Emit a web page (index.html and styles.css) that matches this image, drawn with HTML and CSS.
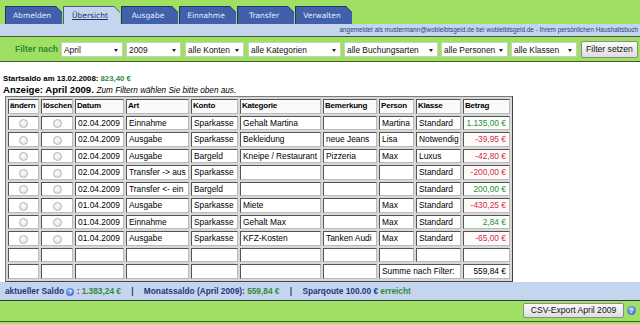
FILE: index.html
```html
<!DOCTYPE html>
<html lang="de">
<head>
<meta charset="utf-8">
<title>wobleibtsgeld.de - Übersicht</title>
<link rel="stylesheet" href="styles.css">
</head>
<body>
<div class="page">
  <div class="tabs">
    <div class="tab"><span>Abmelden</span></div>
    <div class="tab active"><span>Übersicht</span></div>
    <div class="tab"><span>Ausgabe</span></div>
    <div class="tab"><span>Einnahme</span></div>
    <div class="tab"><span>Transfer</span></div>
    <div class="tab"><span>Verwalten</span></div>
  </div>
  <div class="info">angemeldet als mustermann@wobleibtsgeld.de bei wobleibtsgeld.de - Ihrem persönlichen Haushaltsbuch</div>
  <div class="filter">
    <span class="flabel">Filter nach</span>
    <div class="sel w-month">April<i></i></div>
    <div class="sel w-year">2009<i></i></div>
    <div class="sel w-konto">alle Konten<i></i></div>
    <div class="sel w-kat">alle Kategorien<i></i></div>
    <div class="sel w-buch">alle Buchungsarten<i></i></div>
    <div class="sel w-pers">alle Personen<i></i></div>
    <div class="sel w-kl">alle Klassen<i></i></div>
    <div class="btn fbtn">Filter setzen</div>
  </div>
  <div class="content">
    <div class="start">Startsaldo am 13.02.2008: <span class="pos">823,40 €</span></div>
    <div class="anzeige">Anzeige: April 2009. <em>Zum Filtern wählen Sie bitte oben aus.</em></div>
    <table class="list">
      <colgroup>
        <col class="c1"><col class="c2"><col class="c3"><col class="c4"><col class="c5">
        <col class="c6"><col class="c7"><col class="c8"><col class="c9"><col class="c10">
      </colgroup>
      <tr class="head">
        <th>ändern</th><th>löschen</th><th>Datum</th><th>Art</th><th>Konto</th><th>Kategorie</th><th>Bemerkung</th><th>Person</th><th>Klasse</th><th>Betrag</th>
      </tr>
      <tr><td class="r"><span class="radio"></span></td><td class="r"><span class="radio"></span></td><td>02.04.2009</td><td>Einnahme</td><td>Sparkasse</td><td>Gehalt Martina</td><td></td><td>Martina</td><td>Standard</td><td class="amt pos">1.135,00 €</td></tr>
      <tr><td class="r"><span class="radio"></span></td><td class="r"><span class="radio"></span></td><td>02.04.2009</td><td>Ausgabe</td><td>Sparkasse</td><td>Bekleidung</td><td>neue Jeans</td><td>Lisa</td><td>Notwendig</td><td class="amt neg">-39,95 €</td></tr>
      <tr><td class="r"><span class="radio"></span></td><td class="r"><span class="radio"></span></td><td>02.04.2009</td><td>Ausgabe</td><td>Bargeld</td><td>Kneipe / Restaurant</td><td>Pizzeria</td><td>Max</td><td>Luxus</td><td class="amt neg">-42,80 €</td></tr>
      <tr><td class="r"><span class="radio"></span></td><td class="r"><span class="radio"></span></td><td>02.04.2009</td><td>Transfer -&gt; aus</td><td>Sparkasse</td><td></td><td></td><td></td><td>Standard</td><td class="amt neg">-200,00 €</td></tr>
      <tr><td class="r"><span class="radio"></span></td><td class="r"><span class="radio"></span></td><td>02.04.2009</td><td>Transfer &lt;- ein</td><td>Bargeld</td><td></td><td></td><td></td><td>Standard</td><td class="amt pos">200,00 €</td></tr>
      <tr><td class="r"><span class="radio"></span></td><td class="r"><span class="radio"></span></td><td>01.04.2009</td><td>Ausgabe</td><td>Sparkasse</td><td>Miete</td><td></td><td>Max</td><td>Standard</td><td class="amt neg">-430,25 €</td></tr>
      <tr><td class="r"><span class="radio"></span></td><td class="r"><span class="radio"></span></td><td>01.04.2009</td><td>Einnahme</td><td>Sparkasse</td><td>Gehalt Max</td><td></td><td>Max</td><td>Standard</td><td class="amt pos">2,84 €</td></tr>
      <tr><td class="r"><span class="radio"></span></td><td class="r"><span class="radio"></span></td><td>01.04.2009</td><td>Ausgabe</td><td>Sparkasse</td><td>KFZ-Kosten</td><td>Tanken Audi</td><td>Max</td><td>Standard</td><td class="amt neg">-65,00 €</td></tr>
      <tr><td></td><td></td><td></td><td></td><td></td><td></td><td></td><td></td><td></td><td></td></tr>
      <tr><td></td><td></td><td></td><td></td><td></td><td></td><td></td><td colspan="2">Summe nach Filter:</td><td class="amt">559,84 €</td></tr>
    </table>
  </div>
  <div class="saldo">
    aktueller Saldo <span class="help">?</span> : <span class="pos">1.383,24 €</span>
    <span class="sep">|</span>
    Monatssaldo (April 2009): <span class="pos">559,84 €</span>
    <span class="sep">|</span>
    Sparqoute 100.00 € <span class="pos">erreicht</span>
  </div>
  <div class="footer">
    <div class="btn csv">CSV-Export April 2009</div>
    <span class="help big">?</span>
  </div>
</div>
</body>
</html>
```

FILE: styles.css
```css
html, body {
  margin: 0;
  padding: 0;
}
body {
  background: #9fe062;
  font-family: "Liberation Sans", Arial, sans-serif;
  color: #000;
}
.page {
  width: 640px;
  height: 324px;
  overflow: hidden;
  background: #9fe062;
}

/* tabs */
.tabs {
  height: 24px;
  display: flex;
  align-items: flex-end;
  gap: 1px;
  padding-left: 5px;
}
.tab {
  position: relative;
  width: 57px;
  height: 18px;
  background: #22346e;
  clip-path: polygon(0 0, calc(100% - 6px) 0, 100% 6px, 100% 100%, 0 100%);
}
.tab span {
  display: flex;
  align-items: center;
  justify-content: center;
  height: 17px;
  margin: 1px 0 0 1px;
  padding-right: 4px;
  background: #4060ac;
  clip-path: polygon(0 0, calc(100% - 6px) 0, 100% 6px, 100% 100%, 0 100%);
  font-family: "DejaVu Sans", Verdana, sans-serif;
  font-size: 7.5px;
  color: #e6ecff;
}
.tab.active {
  background: #4a5f8e;
}
.tab.active span {
  background: #c6d5ee;
  color: #1d2f66;
  text-decoration: underline;
}

/* info bar */
.info {
  height: 12px;
  line-height: 12px;
  background: #c6d5ee;
  border-bottom: 1px solid #3e5a36;
  text-align: right;
  padding-right: 2px;
  font-size: 6.4px;
  color: #263c7c;
  white-space: nowrap;
}

/* filter bar */
.filter {
  height: 24px;
  display: flex;
  align-items: center;
  border-bottom: 1px solid #3e5a36;
  padding-left: 15px;
}
.flabel {
  width: 46px;
  font-size: 8.5px;
  font-weight: bold;
  color: #2d8a35;
  white-space: nowrap;
}
.sel {
  position: relative;
  height: 15px;
  line-height: 15px;
  background: #fff;
  border: 1px solid #c8d0c0;
  box-sizing: border-box;
  padding-left: 2px;
  font-size: 8.4px;
  color: #111;
  margin-right: 3px;
  white-space: nowrap;
}
.sel i {
  position: absolute;
  right: 4px;
  top: 6px;
  width: 0;
  height: 0;
  border-left: 2.5px solid transparent;
  border-right: 2.5px solid transparent;
  border-top: 3.5px solid #222;
}
.w-month { width: 62px; }
.w-year { width: 55px; margin-right: 4px; }
.w-konto { width: 59px; margin-right: 4px; }
.w-kat { width: 93px; }
.w-buch { width: 94px; }
.w-pers { width: 67px; }
.w-kl { width: 66px; margin-right: 4px; }
.btn {
  box-sizing: border-box;
  background: linear-gradient(#fbfbfb, #dedede);
  border: 1px solid #8a8a8a;
  border-radius: 2px;
  text-align: center;
  font-size: 8.6px;
  color: #111;
  white-space: nowrap;
}
.fbtn {
  width: 57px;
  height: 17px;
  line-height: 15px;
}

/* content */
.content {
  background: #fff;
  padding: 11px 0 0 3px;
  height: 208.5px;
}
.start {
  height: 11px;
  line-height: 11px;
  font-size: 7.8px;
  font-weight: bold;
}
.anzeige {
  height: 12px;
  line-height: 12px;
  font-size: 9.6px;
  font-weight: bold;
}
.anzeige em {
  font-weight: normal;
  font-size: 8.2px;
}
.pos { color: #2e8b3a; }
.neg { color: #cc3344; }

table.list {
  margin-left: 2px;
  table-layout: fixed;
  width: 506px;
  border-collapse: separate;
  border-spacing: 2px;
  border: 1px solid #7a7a7a;
  border-right-color: #444;
  border-bottom-color: #444;
  background: #d8d8d8;
}
.c1 { width: 31px; }
.c2 { width: 32px; }
.c3 { width: 49px; }
.c4 { width: 63px; }
.c5 { width: 47px; }
.c6 { width: 81px; }
.c7 { width: 54px; }
.c8 { width: 35px; }
.c9 { width: 45px; }
.c10 { width: 47px; }
table.list th,
table.list td {
  box-sizing: border-box;
  height: 14.5px;
  padding: 0 0 0 2px;
  border: 1px solid #555;
  border-right-color: #bbb;
  border-bottom-color: #bbb;
  background: #fff;
  text-align: left;
  white-space: nowrap;
  overflow: hidden;
  font-size: 8.4px;
  line-height: 12px;
}
table.list th {
  font-weight: bold;
  font-size: 8px;
  letter-spacing: -0.2px;
  padding-left: 1px;
  background: #fafafa;
}
table.list td.r {
  text-align: center;
  padding: 0;
}
table.list td.amt {
  text-align: right;
  padding: 0 3px 0 0;
}
table.list td.amt.pos { background: #fbfffb; }
table.list td.amt.neg { background: #fffafa; }
.radio {
  display: inline-block;
  width: 7px;
  height: 7px;
  border: 1px solid #b4b4b4;
  border-radius: 50%;
  background: radial-gradient(circle at 45% 40%, #fdfdfd, #dcdcdc);
  vertical-align: middle;
}

/* saldo bar */
.saldo {
  height: 18px;
  line-height: 18px;
  background: #c6d5ee;
  border-bottom: 1px solid #2c3a48;
  padding-left: 5px;
  font-size: 8.3px;
  font-weight: bold;
  color: #1f3778;
  white-space: nowrap;
}
.saldo .sep {
  margin: 0 8px;
}
.help {
  display: inline-block;
  width: 8px;
  height: 8px;
  border-radius: 50%;
  background: radial-gradient(circle at 40% 35%, #8fb2f2, #2a5cc6);
  color: #fff;
  font-size: 6px;
  line-height: 8px;
  text-align: center;
  vertical-align: 0;
  font-weight: bold;
}

/* footer */
.footer {
  height: 20px;
  display: flex;
  align-items: center;
  justify-content: flex-end;
  border-bottom: 1px solid #3e5a36;
  padding-right: 4px;
}
.csv {
  width: 101px;
  height: 15px;
  line-height: 13px;
  margin-right: 3px;
}
.help.big {
  width: 9px;
  height: 9px;
  line-height: 9px;
  font-size: 7px;
}
```
